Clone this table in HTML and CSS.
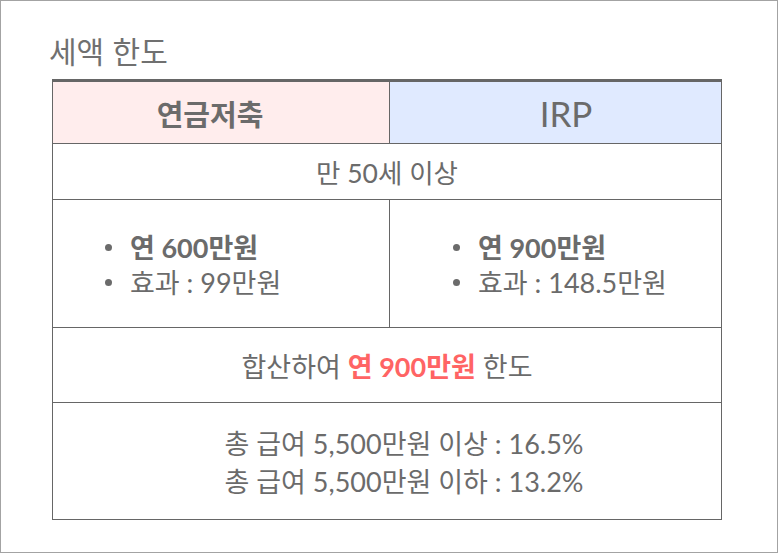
FILE: index.html
```html
<!DOCTYPE html>
<html lang="ko">
<head>
<meta charset="utf-8">
<link rel="stylesheet" href="styles.css">
</head>
<body>
<div class="frame">
  <h1 class="title">세액 한도</h1>
  <div class="table">
    <div class="row head">
      <div class="cell pink"><span class="head-left">연금저축</span></div>
      <div class="cell blue"><span class="irp">IRP</span></div>
    </div>
    <div class="row single age">
      <div class="cell"><span>만 50세 이상</span></div>
    </div>
    <div class="row limits">
      <div class="cell cell-left">
        <ul class="list">
          <li><b>연 600만원</b></li>
          <li>효과 : 99만원</li>
        </ul>
      </div>
      <div class="cell cell-right">
        <ul class="list">
          <li><b>연 900만원</b></li>
          <li>효과 : 148.5만원</li>
        </ul>
      </div>
    </div>
    <div class="row single total">
      <div class="cell"><span>합산하여 <b class="red">연 900만원</b> 한도</span></div>
    </div>
    <div class="row single rates">
      <div class="cell"><span>총 급여 5,500만원 이상 : 16.5%<br>총 급여 5,500만원 이하 : 13.2%</span></div>
    </div>
  </div>
</div>
</body>
</html>
```
FILE: styles.css
```css
* { box-sizing: border-box; }
html, body { margin: 0; padding: 0; background: #fff; }
body {
  font-family: "Lato", "Noto Sans CJK KR", sans-serif;
  color: #6b6b6b;
}
.frame {
  width: 778px;
  height: 553px;
  border: 1px solid #a3a3a3;
  padding: 0 55px 0 51px;
}
.title {
  margin: 28px 0 0 -3px;
  height: 50px;
  font-family: "Noto Sans CJK KR", sans-serif;
  font-size: 30px;
  font-weight: 400;
  line-height: 42px;
  color: #707070;
}
.table {
  border-top: 3px solid #666;
  border-left: 1px solid #666;
  border-right: 1px solid #666;
  border-bottom: 1px solid #666;
}
.row {
  display: grid;
  grid-template-columns: 336px 1fr;
  border-bottom: 1px solid #666;
}
.row:last-child { border-bottom: none; }
.row.single { grid-template-columns: 1fr; }
.cell {
  display: flex;
  align-items: center;
  justify-content: center;
  text-align: center;
}
.row > .cell + .cell { border-left: 1px solid #666; }
.head { height: 62px; }
.head .cell {
  font-family: "Noto Sans CJK KR", sans-serif;
  font-size: 29px;
  font-weight: 700;
  color: #6b6b6b;
}
.head-left { margin-right: 22px; }
.head .irp {
  margin-left: 21px;
  font-family: "Lato", sans-serif;
  font-weight: 400;
  font-size: 35px;
}
.pink { background: #ffeded; }
.blue { background: #e0eaff; }
.age { height: 56px; font-size: 26.5px; }
.limits { height: 128px; font-size: 27px; }
.cell-left, .cell-right { justify-content: flex-start; }
.cell-left { padding-left: 52px; }
.cell-right { padding-left: 63px; }
.list {
  margin: 3px 0 0;
  padding: 0;
  list-style: none;
  text-align: left;
  line-height: 35px;
}
.list li {
  display: flex;
  align-items: center;
}
.list li::before {
  content: "";
  width: 7px;
  height: 7px;
  border-radius: 50%;
  background: #6b6b6b;
  margin-right: 18px;
  flex: none;
}
.list b { font-weight: 700; }
.total { height: 75px; font-size: 27px; }
.red { color: #ff6464; font-weight: 700; }
.rates { height: 116px; font-size: 27px; line-height: 37.5px; }
.rates .cell { padding-left: 34px; padding-top: 3px; }
```
